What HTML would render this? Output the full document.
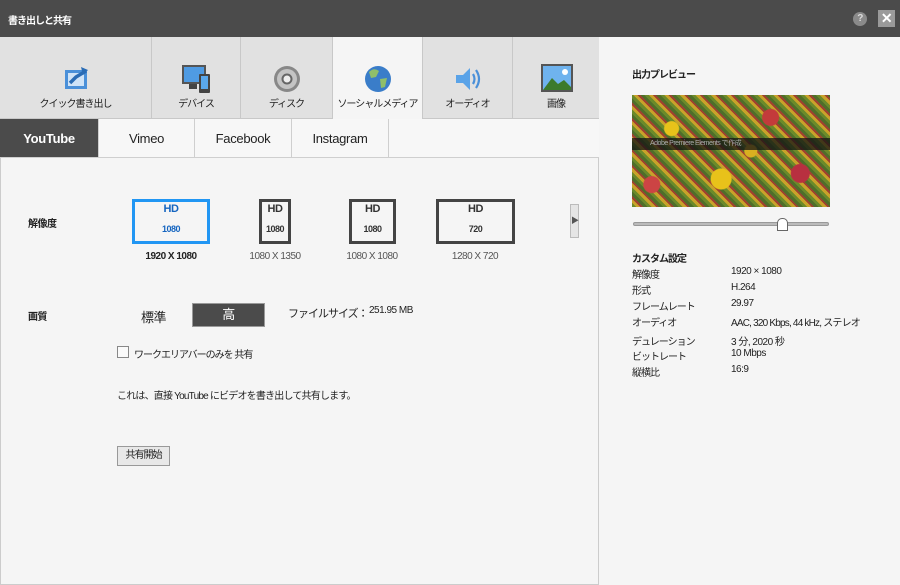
<!DOCTYPE html>
<html><head><meta charset="utf-8"><style>
*{margin:0;padding:0;box-sizing:border-box}
body{width:900px;height:585px;background:#f5f5f5;font-family:"Liberation Sans","Noto Sans CJK JP",sans-serif;font-size:10px;color:#222;position:relative;overflow:hidden;letter-spacing:-0.5px}
.a{position:absolute;white-space:nowrap}
.title{left:0;top:0;width:900px;height:37px;background:#4b4b4b;color:#fff;font-size:10px;font-weight:bold}
.tab{top:37px;height:82px;background:#e1e1e1;border-right:1px solid #c8c8c8;border-bottom:1px solid #c8c8c8;text-align:center}
.tab .l{position:absolute;left:0;right:0;top:58px;font-size:10px;letter-spacing:-1px}
.tab svg{position:absolute;left:50%;top:27px;margin-left:-15px}
.sub{top:119px;height:39px;background:#f7f7f7;border-right:1px solid #cfcfcf;border-bottom:1px solid #cfcfcf;text-align:center;line-height:39px;font-size:13px;letter-spacing:-0.3px}
.res{border:3px solid #444;text-align:center;color:#333;font-weight:bold}
.res .h{font-size:11px;margin-top:1px}
.res .n{font-size:9px;margin-top:9px}
.rl{text-align:center;font-size:10px;color:#555;top:251px}
.k{left:632px;font-size:10px;letter-spacing:-1px}
.v{left:731px;font-size:10px}
</style></head><body>
<div class="a title"><span class="a" style="left:8px;top:12px;letter-spacing:-1px">書き出しと共有</span>
<div class="a" style="left:853px;top:12px;width:14px;height:14px;border-radius:50%;background:#8a8a8a;font-size:10px;text-align:center;line-height:14px;color:#ddd">?</div>
<div class="a" style="left:878px;top:10px;width:17px;height:17px;background:#9a9a9a;color:#fff;font-size:14px;text-align:center;line-height:17px;font-weight:bold">✕</div></div>
<div class="a" style="left:0;top:37px;width:599px;height:548px;border-left:1px solid #ccc;border-right:1px solid #ccc;border-bottom:1px solid #ccc"></div>
<div class="a tab" style="left:0;width:152px"><svg width="30" height="28"><rect x="4" y="6" width="22" height="19" fill="#4a90d9"/><rect x="7" y="9" width="16" height="13" fill="#cfe3f7"/><path d="M9 19 L15 13 L25 7" stroke="#2a6cb5" stroke-width="3.5" fill="none"/><path d="M20 3 L27 6 L22 11 Z" fill="#2a6cb5"/></svg><div class="l">クイック書き出し</div></div>
<div class="a tab" style="left:152px;width:89px"><svg width="32" height="30"><rect x="1" y="1" width="24" height="19" fill="#555"/><rect x="3" y="3" width="20" height="15" fill="#4f9be3"/><rect x="8" y="20" width="8" height="5" fill="#444"/><rect x="18" y="10" width="11" height="19" rx="1" fill="#444"/><rect x="20" y="12" width="7" height="13" fill="#5aa8ec"/></svg><div class="l">デバイス</div></div>
<div class="a tab" style="left:241px;width:92px"><svg width="30" height="30"><circle cx="15" cy="15" r="13" fill="#888"/><circle cx="15" cy="15" r="10" fill="#c4c4c4"/><circle cx="15" cy="15" r="4.5" fill="#eee" stroke="#666" stroke-width="2"/></svg><div class="l">ディスク</div></div>
<div class="a tab" style="left:333px;width:90px;background:#f5f5f5;border-bottom:none"><svg width="30" height="30"><circle cx="15" cy="15" r="13" fill="#3a7dc9"/><path d="M6 8 Q11 3 16 7 L13 13 L8 14 Z M17 15 L24 14 L22 23 L18 24 Z" fill="#8fbf6a"/></svg><div class="l">ソーシャルメディア</div></div>
<div class="a tab" style="left:423px;width:90px"><svg width="30" height="30"><path d="M3 11 H10 L17 4 V26 L10 19 H3 Z" fill="#5aa3e8"/><path d="M20 10 Q23 15 20 20 M23 6 Q29 15 23 24" stroke="#4a90d9" stroke-width="2.2" fill="none"/></svg><div class="l">オーディオ</div></div>
<div class="a tab" style="left:513px;width:86px;border-right:none"><svg width="32" height="28"><rect x="0" y="0" width="32" height="28" fill="#555"/><rect x="2" y="2" width="28" height="24" fill="#6fb3ee"/><path d="M2 26 L11 14 L17 20 L23 16 L30 23 V26 Z" fill="#3c7a2c"/><circle cx="24" cy="8" r="3" fill="#fff"/></svg><div class="l">画像</div></div>
<div class="a sub" style="left:0;width:99px;background:#4b4b4b;color:#fff;font-weight:bold">YouTube</div>
<div class="a sub" style="left:99px;width:96px">Vimeo</div>
<div class="a sub" style="left:195px;width:97px">Facebook</div>
<div class="a sub" style="left:292px;width:97px">Instagram</div>
<div class="a sub" style="left:389px;width:210px;border-right:none"></div>
<div class="a" style="left:28px;top:215px;font-weight:bold">解像度</div>
<div class="a res" style="left:132px;top:199px;width:78px;height:45px;border-color:#2196f3;color:#1565c0"><div class="h">HD</div><div class="n">1080</div></div>
<div class="a res" style="left:259px;top:199px;width:32px;height:45px"><div class="h">HD</div><div class="n">1080</div></div>
<div class="a res" style="left:349px;top:199px;width:47px;height:45px"><div class="h">HD</div><div class="n">1080</div></div>
<div class="a res" style="left:436px;top:199px;width:79px;height:45px"><div class="h">HD</div><div class="n">720</div></div>
<div class="a rl" style="left:131px;width:80px;font-weight:bold;color:#222">1920 X 1080</div>
<div class="a rl" style="left:235px;width:80px">1080 X 1350</div>
<div class="a rl" style="left:332px;width:80px">1080 X 1080</div>
<div class="a rl" style="left:435px;width:80px">1280 X 720</div>
<div class="a" style="left:570px;top:204px;width:9px;height:34px;background:#e5e5e5;border:1px solid #bbb;font-size:8px;line-height:32px;color:#555;text-align:center">▶</div>
<div class="a" style="left:28px;top:308px;font-weight:bold">画質</div>
<div class="a" style="left:141px;top:307px;font-size:13px">標準</div>
<div class="a" style="left:192px;top:303px;width:73px;height:24px;background:#4b4b4b;border:1px solid #999;color:#fff;text-align:center;line-height:22px;font-size:13px">高</div>
<div class="a" style="left:288px;top:305px;font-size:11px;letter-spacing:-1px">ファイルサイズ：</div>
<div class="a" style="left:369px;top:305px;font-size:10px">251.95 MB</div>
<div class="a" style="left:117px;top:346px;width:12px;height:12px;border:1px solid #888;background:#fafafa"></div>
<div class="a" style="left:134px;top:346px;letter-spacing:-1px">ワークエリアバーのみを 共有</div>
<div class="a" style="left:117px;top:387px;letter-spacing:-0.8px">これは、直接 YouTube にビデオを書き出して共有します。</div>
<div class="a" style="left:117px;top:446px;width:53px;height:20px;border:1px solid #999;background:#e8e8e8;text-align:center;line-height:18px;letter-spacing:-1px">共有開始</div>
<div class="a" style="left:632px;top:66px;font-weight:bold;letter-spacing:-1px">出力プレビュー</div>
<div class="a" style="left:632px;top:95px;width:198px;height:112px;background:
radial-gradient(circle at 20% 30%,#e8c21a 0 7px,transparent 8px),
radial-gradient(circle at 70% 20%,#c33b3b 0 8px,transparent 9px),
radial-gradient(circle at 45% 75%,#e8c21a 0 10px,transparent 11px),
radial-gradient(circle at 85% 70%,#b83040 0 9px,transparent 10px),
radial-gradient(circle at 10% 80%,#c44 0 8px,transparent 9px),
radial-gradient(circle at 60% 50%,#d9b020 0 6px,transparent 7px),
repeating-linear-gradient(45deg,#6b8a2a 0 3px,#c9a22a 3px 6px,#a04030 6px 8px,#4f6e2a 8px 11px),
#7a7a30;"></div>
<div class="a" style="left:632px;top:138px;width:198px;height:12px;background:rgba(20,20,20,.75);color:#aaa;font-size:7px;line-height:12px;padding-left:18px">Adobe Premiere Elements で作成</div>
<div class="a" style="left:633px;top:222px;width:196px;height:4px;border-radius:2px;background:#bbb;border:1px solid #999"></div>
<div class="a" style="left:777px;top:218px;width:11px;height:13px;background:#fff;border:1px solid #666;border-radius:5px 5px 0 0"></div>
<div class="a k" style="top:250px;font-weight:bold">カスタム設定</div>
<div class="a k" style="top:266px">解像度</div><div class="a v" style="top:266px">1920 × 1080</div>
<div class="a k" style="top:282px">形式</div><div class="a v" style="top:282px">H.264</div>
<div class="a k" style="top:298px">フレームレート</div><div class="a v" style="top:298px">29.97</div>
<div class="a k" style="top:314px">オーディオ</div><div class="a v" style="top:314px;letter-spacing:-0.8px">AAC, 320 Kbps, 44 kHz, ステレオ</div>
<div class="a k" style="top:333px">デュレーション</div><div class="a v" style="top:333px">3 分, 2020 秒</div>
<div class="a k" style="top:348px">ビットレート</div><div class="a v" style="top:348px">10 Mbps</div>
<div class="a k" style="top:364px">縦横比</div><div class="a v" style="top:364px">16:9</div>
</body></html>
